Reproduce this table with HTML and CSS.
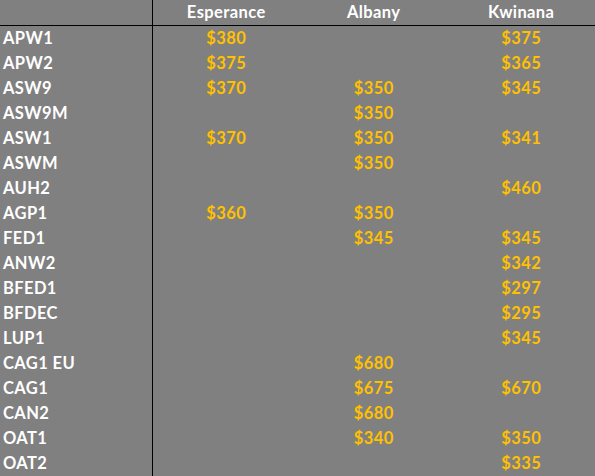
FILE: index.html
```html
<!DOCTYPE html>
<html>
<head>
<meta charset="utf-8">
<link rel="stylesheet" href="styles.css">
</head>
<body>
<table class="prices">
  <thead>
    <tr><th class="label"></th><th>Esperance</th><th>Albany</th><th>Kwinana</th></tr>
  </thead>
  <tbody>
    <tr><td class="label">APW1</td><td>$380</td><td></td><td>$375</td></tr>
    <tr><td class="label">APW2</td><td>$375</td><td></td><td>$365</td></tr>
    <tr><td class="label">ASW9</td><td>$370</td><td>$350</td><td>$345</td></tr>
    <tr><td class="label">ASW9M</td><td></td><td>$350</td><td></td></tr>
    <tr><td class="label">ASW1</td><td>$370</td><td>$350</td><td>$341</td></tr>
    <tr><td class="label">ASWM</td><td></td><td>$350</td><td></td></tr>
    <tr><td class="label">AUH2</td><td></td><td></td><td>$460</td></tr>
    <tr><td class="label">AGP1</td><td>$360</td><td>$350</td><td></td></tr>
    <tr><td class="label">FED1</td><td></td><td>$345</td><td>$345</td></tr>
    <tr><td class="label">ANW2</td><td></td><td></td><td>$342</td></tr>
    <tr><td class="label">BFED1</td><td></td><td></td><td>$297</td></tr>
    <tr><td class="label">BFDEC</td><td></td><td></td><td>$295</td></tr>
    <tr><td class="label">LUP1</td><td></td><td></td><td>$345</td></tr>
    <tr><td class="label">CAG1 EU</td><td></td><td>$680</td><td></td></tr>
    <tr><td class="label">CAG1</td><td></td><td>$675</td><td>$670</td></tr>
    <tr><td class="label">CAN2</td><td></td><td>$680</td><td></td></tr>
    <tr><td class="label">OAT1</td><td></td><td>$340</td><td>$350</td></tr>
    <tr><td class="label">OAT2</td><td></td><td></td><td>$335</td></tr>
  </tbody>
</table>
</body>
</html>
```
FILE: styles.css
```css
html, body {
  margin: 0;
  padding: 0;
  background: #808080;
}
.prices {
  border-collapse: collapse;
  table-layout: fixed;
  width: 595px;
  font-family: Lato, "Liberation Sans", sans-serif;
  font-weight: 700;
  font-size: 16.5px;
  letter-spacing: 0.4px;
}
.prices th, .prices td {
  height: 25px;
  padding: 0;
  line-height: 25px;
  text-align: center;
  color: #ffc000;
  width: 147px;
  white-space: nowrap;
  vertical-align: top;
}
.prices th {
  color: #ffffff;
  border-bottom: 1px solid #000000;
}
.prices .label {
  width: 148px;
  text-align: left;
  padding-left: 3px;
  color: #ffffff;
  border-right: 1px solid #000000;
}
```
